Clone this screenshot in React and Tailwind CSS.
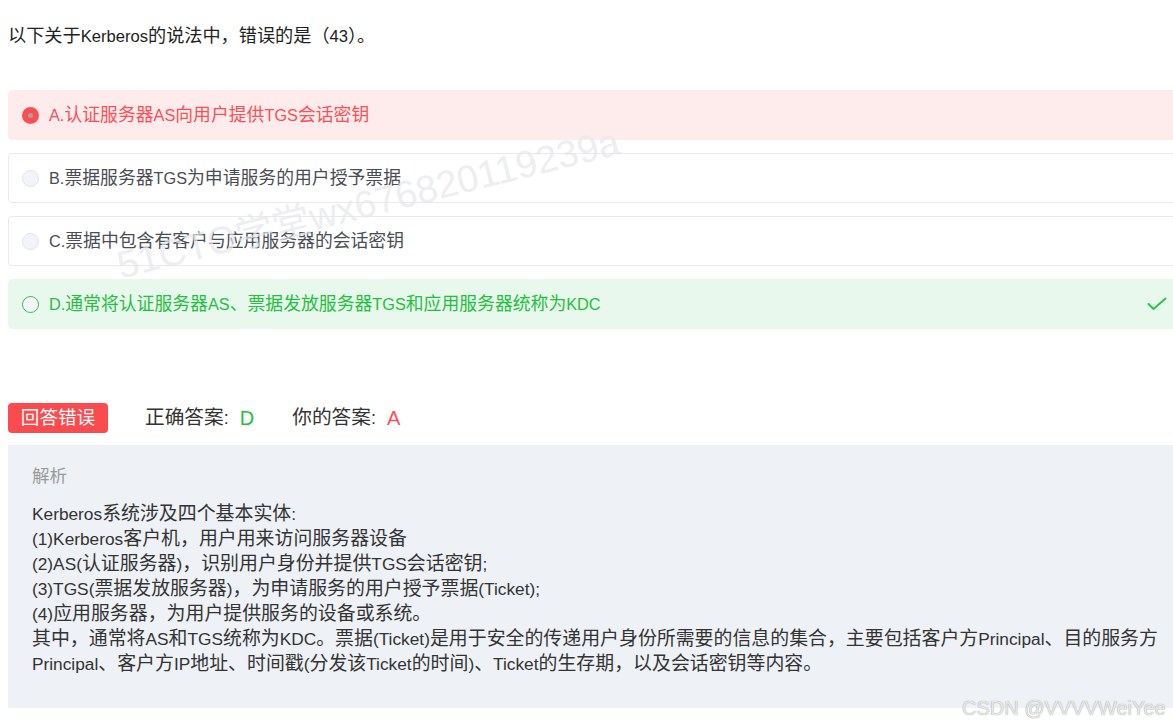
import React from 'react'

const font = { fontFamily: '"Liberation Sans", "Noto Sans CJK SC", sans-serif' }

// CJK glyphs in the shot run a bit wider than the Latin beside them
function T({ children }) {
  const parts = String(children).split(/([\u3000-\u303f\u4e00-\u9fff\uff00-\uffef]+)/)
  return parts.map((p, i) =>
    i % 2 === 1
      ? <span key={i} className="text-[1.094em] leading-none">{p}</span>
      : <React.Fragment key={i}>{p}</React.Fragment>
  )
}

const options = [
  { key: 'A', text: 'A.认证服务器AS向用户提供TGS会话密钥', state: 'wrong' },
  { key: 'B', text: 'B.票据服务器TGS为申请服务的用户授予票据', state: 'none' },
  { key: 'C', text: 'C.票据中包含有客户与应用服务器的会话密钥', state: 'none' },
  { key: 'D', text: 'D.通常将认证服务器AS、票据发放服务器TGS和应用服务器统称为KDC', state: 'right' },
]

const analysis = [
  'Kerberos系统涉及四个基本实体:',
  '(1)Kerberos客户机，用户用来访问服务器设备',
  '(2)AS(认证服务器)，识别用户身份并提供TGS会话密钥;',
  '(3)TGS(票据发放服务器)，为申请服务的用户授予票据(Ticket);',
  '(4)应用服务器，为用户提供服务的设备或系统。',
  '其中，通常将AS和TGS统称为KDC。票据(Ticket)是用于安全的传递用户身份所需要的信息的集合，主要包括客户方Principal、目的服务方',
  'Principal、客户方IP地址、时间戳(分发该Ticket的时间)、Ticket的生存期，以及会话密钥等内容。',
]

function Radio({ state }) {
  if (state === 'wrong') {
    return (
      <span className="w-[17px] h-[17px] rounded-full bg-[#fa4f52] flex items-center justify-center shrink-0">
        <span className="w-[5px] h-[5px] rounded-full bg-[#a3a3a3]" />
      </span>
    )
  }
  if (state === 'right') {
    return <span className="w-[17px] h-[17px] rounded-full bg-[#f5f7fc] border border-[#2cc34a] shrink-0" />
  }
  return <span className="w-[17px] h-[17px] rounded-full bg-[#f2f4f9] border border-[#e1e4ec] shrink-0" />
}

function Option({ o }) {
  const box = o.state === 'wrong'
    ? 'bg-[#feeced] border-[#feeced] text-[#fb4f55]'
    : o.state === 'right'
      ? 'bg-[#e9f8ec] border-[#e9f8ec] text-[#23c03f]'
      : 'bg-white border-[#e8eaf0] text-[#4a4d54]'
  return (
    <div className={`h-[50px] rounded border flex items-center pl-[13px] pr-[22px] gap-[10px] ${box}`}>
      <Radio state={o.state} />
      <span className="text-[16.3px] flex-1 whitespace-nowrap"><T>{o.text}</T></span>
      {o.state === 'right' && (
        <svg width="20" height="14" viewBox="0 0 20 14" fill="none" stroke="#2cc34a" strokeWidth="2" strokeLinecap="round" strokeLinejoin="round">
          <path d="M1.5 7l5 5L18.5 1.5" />
        </svg>
      )}
    </div>
  )
}

export default function App() {
  return (
    <div className="relative w-full h-[726px] overflow-hidden bg-white" style={font}>
      <div className="w-[1190px] pl-2">
        <div className="pt-[27px] text-[16.6px] text-[#222] leading-[20px] whitespace-nowrap"><T>以下关于Kerberos的说法中，错误的是（43）。</T></div>

        <div className="mt-[43px] flex flex-col gap-[13px]">
          {options.map(o => <Option key={o.key} o={o} />)}
        </div>

        <div className="mt-[74px] flex items-center h-[30px]">
          <span className="w-[100px] h-[30px] rounded bg-[#fa4b4e] text-white text-[17px] flex items-center justify-center"><T>回答错误</T></span>
          <span className="ml-[37px] text-[18px] text-[#333]"><T>正确答案:</T></span>
          <span className="ml-[11px] text-[20px] text-[#23c03f]">D</span>
          <span className="ml-[38px] text-[18px] text-[#333]"><T>你的答案:</T></span>
          <span className="ml-[11px] text-[20px] text-[#fb4f55]">A</span>
        </div>

        <div className="mt-[12px] h-[263px] bg-[#eef1f6] pl-6 pt-[20px]">
          <div className="text-[16px] text-[#999] leading-[24px]"><T>解析</T></div>
          <div className="mt-[13px] text-[17.3px] text-[#333] leading-[25px]">
            {analysis.map((l, i) => <div key={i} className="whitespace-nowrap"><T>{l}</T></div>)}
          </div>
        </div>
      </div>

      <div className="absolute left-[118px] top-[238px] text-[38px] text-[#e6e8ec] opacity-70 whitespace-nowrap -rotate-[14deg] origin-left pointer-events-none">
        51CTO学堂wx676820119239a
      </div>

      <div className="absolute left-[962px] top-[693px] text-[20px] text-[#e8e8e8] whitespace-nowrap pointer-events-none [text-shadow:0_0_1px_#888]">
        CSDN @VVVVWeiYee
      </div>
    </div>
  )
}
